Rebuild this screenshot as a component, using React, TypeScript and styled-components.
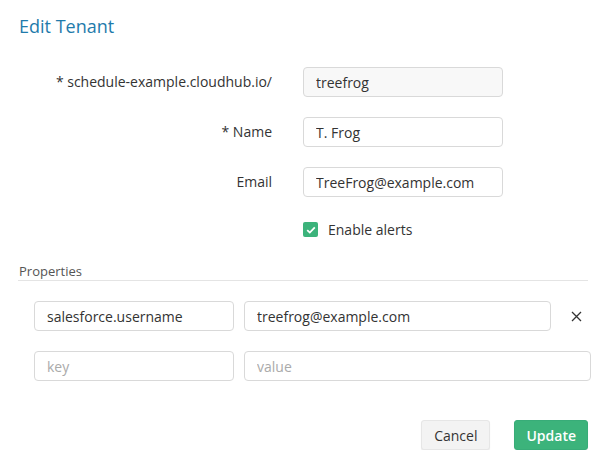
import styled, { createGlobalStyle } from "styled-components";

const GlobalStyle = createGlobalStyle`
  html, body {
    margin: 0;
    background: #fff;
  }
  body {
    font-family: "Open Sans", "Liberation Sans", sans-serif;
    color: #333;
  }
`;

const Dialog = styled.div`
  width: 603px;
  box-sizing: border-box;
  padding: 14px 15px 0 18px;
`;

const Title = styled.h2`
  margin: 0 0 29px 1px;
  font-size: 18px;
  line-height: 24px;
  font-weight: 400;
  color: #1f7bab;
`;

const FormGrid = styled.div`
  display: grid;
  grid-template-columns: 254px 200px;
  column-gap: 31px;
  row-gap: 20px;
  align-items: center;
`;

const Label = styled.label`
  text-align: right;
  font-size: 14px;
  line-height: 20px;
  color: #333;
`;

const Input = styled.input<{ $readOnly?: boolean }>`
  box-sizing: border-box;
  width: 100%;
  height: 30px;
  padding: 0 12px;
  border: 1px solid #d9d9d9;
  border-radius: 4px;
  background: ${({ $readOnly }) => ($readOnly ? "#f8f8f8" : "#fff")};
  font-family: inherit;
  font-size: 14px;
  color: #333;
  outline: none;

  &::placeholder {
    color: #aaa;
  }
`;

const CheckRow = styled.label`
  grid-column: 2;
  height: 25px;
  display: flex;
  align-items: center;
  gap: 10px;
  font-size: 14px;
  color: #333;
`;

const CheckBox = styled.span`
  width: 15px;
  height: 15px;
  border-radius: 2px;
  background: #3cb37b;
  display: inline-flex;
  align-items: center;
  justify-content: center;
`;

const SectionHeader = styled.div`
  margin-top: 20px;
  padding-left: 1px;
  font-size: 13px;
  line-height: 18px;
  color: #555;
  border-bottom: 1px solid #e4e4e4;
`;

const PropList = styled.div`
  margin-top: 20px;
  padding-left: 16px;
  display: flex;
  flex-direction: column;
  gap: 20px;
`;

const PropRow = styled.div`
  display: flex;
  align-items: center;
  gap: 10px;
  width: 557px;
`;

const KeyField = styled.div`
  width: 200px;
  flex: none;
`;

const ValueField = styled.div`
  flex: 1;
`;

const RemoveButton = styled.button`
  width: 30px;
  height: 30px;
  padding: 0;
  border: none;
  background: transparent;
  display: flex;
  align-items: center;
  justify-content: center;
  cursor: pointer;
`;

const Footer = styled.div`
  margin-top: 39px;
  width: 570px;
  display: flex;
  justify-content: flex-end;
  gap: 24px;
`;

const Button = styled.button<{ $primary?: boolean }>`
  height: 30px;
  padding: 0 ${({ $primary }) => ($primary ? "11px" : "12px")};
  border-radius: 3px;
  border: 1px solid ${({ $primary }) => ($primary ? "#38ac78" : "#e6e6e6")};
  background: ${({ $primary }) => ($primary ? "#3cb37b" : "#f3f3f3")};
  color: ${({ $primary }) => ($primary ? "#fff" : "#333")};
  font-family: inherit;
  font-size: 14px;
  font-weight: ${({ $primary }) => ($primary ? 600 : 400)};
  box-shadow: 0 1px 1px rgba(0, 0, 0, 0.08);
`;

const properties = [{ key: "salesforce.username", value: "treefrog@example.com" }];

const App = () => {
  return (
    <>
      <GlobalStyle />
      <Dialog>
        <Title>Edit Tenant</Title>
        <FormGrid>
          <Label>* schedule-example.cloudhub.io/</Label>
          <Input $readOnly readOnly defaultValue="treefrog" />
          <Label>* Name</Label>
          <Input defaultValue="T. Frog" />
          <Label>Email</Label>
          <Input defaultValue="TreeFrog@example.com" />
          <CheckRow>
            <CheckBox>
              <svg width="10" height="8" viewBox="0 0 10 8">
                <path d="M1.2 4.2 L3.8 6.6 L8.8 1.4" fill="none" stroke="#fff" strokeWidth="1.8" />
              </svg>
            </CheckBox>
            Enable alerts
          </CheckRow>
        </FormGrid>

        <SectionHeader>Properties</SectionHeader>
        <PropList>
          {properties.map((p, i) => (
            <PropRow key={i}>
              <KeyField>
                <Input defaultValue={p.key} />
              </KeyField>
              <ValueField>
                <Input defaultValue={p.value} />
              </ValueField>
              <RemoveButton aria-label="Remove">
                <svg width="11" height="11" viewBox="0 0 11 11">
                  <path d="M1 1 L10 10 M10 1 L1 10" stroke="#333" strokeWidth="1.3" />
                </svg>
              </RemoveButton>
            </PropRow>
          ))}
          <PropRow>
            <KeyField>
              <Input placeholder="key" />
            </KeyField>
            <ValueField>
              <Input placeholder="value" />
            </ValueField>
          </PropRow>
        </PropList>

        <Footer>
          <Button>Cancel</Button>
          <Button $primary>Update</Button>
        </Footer>
      </Dialog>
    </>
  );
};

export default App;
